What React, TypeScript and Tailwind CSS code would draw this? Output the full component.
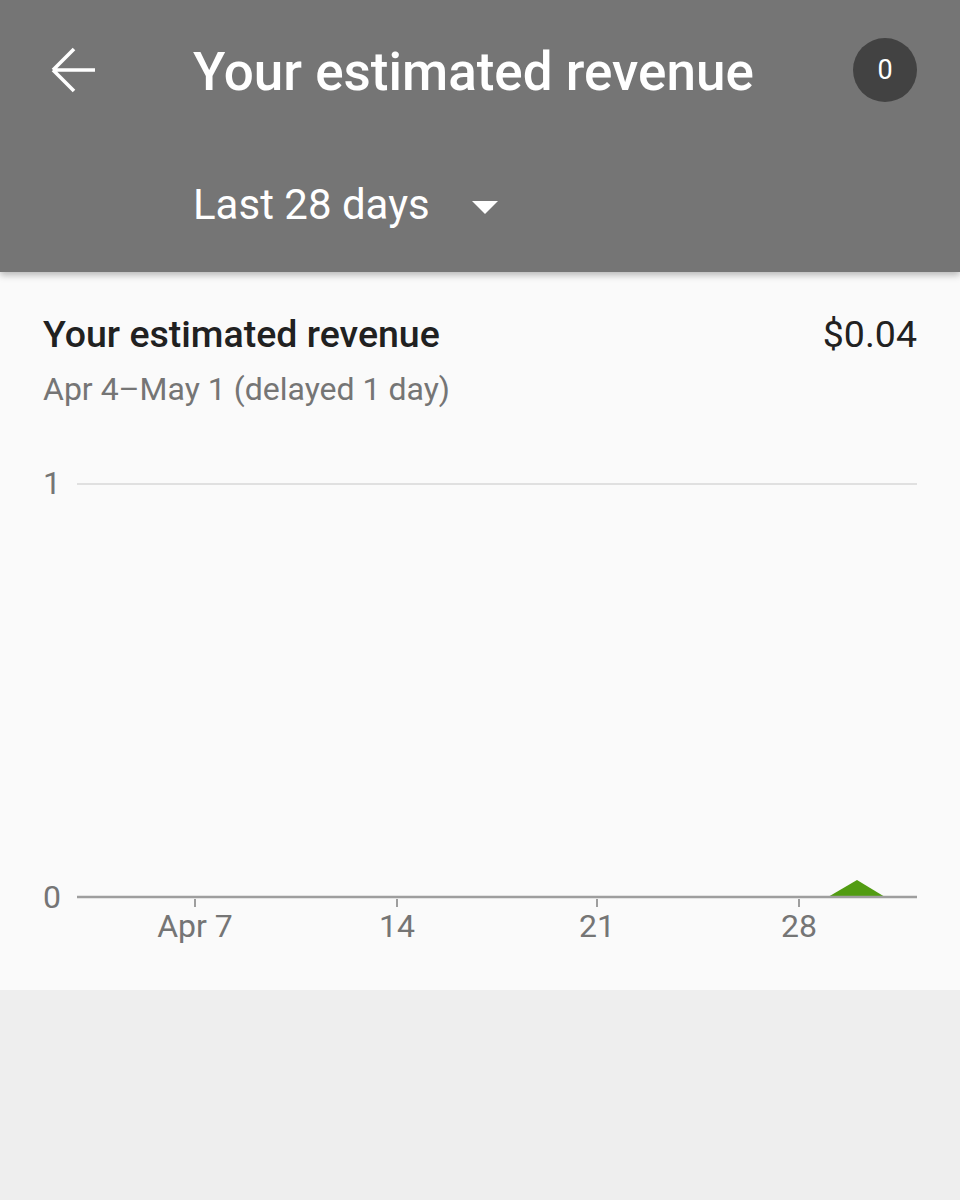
import React from "react";

export default function App() {
  const ticks = [
    { x: 195, label: "Apr 7" },
    { x: 397, label: "14" },
    { x: 597, label: "21" },
    { x: 799, label: "28" },
  ];
  return (
    <div className="min-h-screen bg-[#eeeeee] font-['Roboto',sans-serif]">
      <header className="relative z-10 h-[272px] bg-[#757575] shadow-[0_3px_7px_rgba(0,0,0,0.28)]">
        <div className="flex h-[140px] items-center pl-[50px] pr-[43px]">
          <svg width="48" height="48" viewBox="0 0 48 48" className="shrink-0">
            <path
              d="M3 24 H45 M3 24 L24 3 M3 24 L24 45"
              fill="none"
              stroke="white"
              strokeWidth="3.6"
              strokeLinecap="butt"
              strokeLinejoin="miter"
            />
          </svg>
          <h1 className="ml-[95px] mt-[4px] flex-1 text-[53px] leading-none font-medium text-white">
            Your estimated revenue
          </h1>
          <div className="flex h-16 w-16 items-center justify-center rounded-full bg-[#424242] text-[27px] leading-none text-white">
            0
          </div>
        </div>
        <div className="flex items-center pl-[193px] pt-[44px]">
          <span className="text-[42px] leading-none text-white">Last 28 days</span>
          <svg width="26" height="13" viewBox="0 0 26 13" className="ml-[42px] mt-[4px]">
            <path d="M0 0 H26 L13 13 Z" fill="white" />
          </svg>
        </div>
      </header>
      <section className="bg-[#fafafa] pt-[44px]">
        <div className="flex items-start justify-between px-[43px]">
          <h2 className="text-[37.5px] leading-none font-medium text-[#212121]">
            Your estimated revenue
          </h2>
          <span className="text-[37.5px] leading-none text-[#212121]">$0.04</span>
        </div>
        <p className="mt-[19px] px-[43px] text-[32px] leading-none text-[#757575]">
          Apr 4–May 1 (delayed 1 day)
        </p>
        <svg width="960" height="585" viewBox="0 0 960 585" className="block">
          <line x1="77" y1="79" x2="917" y2="79" stroke="#e0e0e0" strokeWidth="2" />
          <text x="43" y="89" fontSize="32" fill="#757575" fontFamily="Roboto, sans-serif">
            1
          </text>
          <text x="43" y="503" fontSize="32" fill="#757575" fontFamily="Roboto, sans-serif">
            0
          </text>
          <polygon points="828,492 857,475 885,492" fill="#529c12" />
          <line x1="77" y1="492" x2="917" y2="492" stroke="#9e9e9e" strokeWidth="2.5" />
          {ticks.map((t) => (
            <g key={t.label}>
              <line x1={t.x} y1="494" x2={t.x} y2="502" stroke="#9e9e9e" strokeWidth="2" />
              <text
                x={t.x}
                y="532"
                fontSize="32"
                fill="#757575"
                textAnchor="middle"
                fontFamily="Roboto, sans-serif"
              >
                {t.label}
              </text>
            </g>
          ))}
        </svg>
      </section>
    </div>
  );
}
